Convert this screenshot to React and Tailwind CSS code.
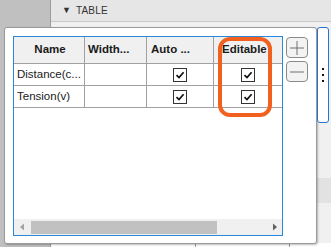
import React from 'react';

const font = { fontFamily: '"Liberation Sans", Arial, sans-serif' };

function Check() {
  return (
    <div className="w-[14px] h-[14px] border border-[#333333] bg-white flex items-center justify-center">
      <svg width="10" height="10" viewBox="0 0 10 10">
        <path d="M1.5 5.2 L4 7.6 L8.6 2.2" fill="none" stroke="#111111" strokeWidth="1.7" />
      </svg>
    </div>
  );
}

function SideButton({ minus }) {
  return (
    <div className="w-[22px] h-[21px] rounded-[4px] border border-[#8a8a8a] bg-[#f3f3f3] flex items-center justify-center">
      <svg width="16" height="16" viewBox="0 0 16 16">
        <path d="M1 8 H15" stroke="#707070" strokeWidth="1" />
        {!minus && <path d="M8 1 V15" stroke="#707070" strokeWidth="1" />}
      </svg>
    </div>
  );
}

const rows = [
  { name: 'Distance(c...', auto: true, editable: true },
  { name: 'Tension(v)', auto: true, editable: true },
];

export default function App() {
  return (
    <div className="relative w-[331px] h-[247px] overflow-hidden flex bg-[#f0f0f0]" style={font}>
      {/* background window */}
      <div className="w-[51px] h-full bg-[#c0c0c0] border-r border-[#9c9c9c]" />
      <div className="flex-1 flex flex-col">
        <div className="h-[22px] bg-[#e6e6e6] border-b border-[#c9c9c9] flex items-center pl-[11px] gap-[5px] text-[#333333]">
          <span className="text-[9px] leading-none">▼</span>
          <span className="text-[10px] leading-none tracking-[0.2px]">TABLE</span>
        </div>
        <div className="flex-1 flex flex-col">
          <div className="h-[156px]" />
          <div className="h-[25px] bg-[#e2e2e2]" />
          <div className="flex-1" />
          <div className="h-[4px] bg-white flex">
            <div className="w-[145px] border-r border-[#9c9c9c]" />
            <div className="w-[94px] border-r border-[#9c9c9c]" />
          </div>
        </div>
      </div>

      {/* popup */}
      <div className="absolute left-[4px] top-[27px] w-[313px] h-[217px] bg-white border border-[#9a9a9a] rounded-[3px] shadow-[1px_1px_2px_rgba(0,0,0,0.25)] flex pl-[8px] pt-[8px]">
        <div className="w-[270px] h-[200px] border border-[#2b87d8] flex flex-col">
          <div className="flex h-[27px] bg-[#f0f0f0] border-b border-[#a0a0a0] text-[11.5px] font-bold text-[#1a1a1a]">
            <div className="w-[71px] border-r border-[#a0a0a0] flex items-center justify-center pl-[2px]">Name</div>
            <div className="w-[62px] border-r border-[#a0a0a0] flex items-center pl-[3px]">Width...</div>
            <div className="w-[67px] border-r border-[#a0a0a0] flex items-center pl-[4px]">Auto ...</div>
            <div className="w-[68px] flex items-center pl-[8px]">Editable</div>
          </div>
          {rows.map((r) => (
            <div key={r.name} className="flex h-[22px] border-b border-[#a0a0a0] text-[11.5px] text-[#1a1a1a]">
              <div className="w-[71px] border-r border-[#a0a0a0] flex items-center pl-[3px] whitespace-nowrap overflow-hidden">{r.name}</div>
              <div className="w-[62px] border-r border-[#a0a0a0]" />
              <div className="w-[67px] border-r border-[#a0a0a0] flex items-center justify-center">{r.auto && <Check />}</div>
              <div className="w-[68px] flex items-center justify-center">{r.editable && <Check />}</div>
            </div>
          ))}
          <div className="flex-1" />
          <div className="h-[16px] bg-[#f0f0f0] flex items-center">
            <svg width="17" height="16" viewBox="0 0 17 16">
              <path d="M6 8 L10 4.5 V11.5 Z" fill="#a3a3a3" />
            </svg>
            <div className="w-[186px] h-[13px] bg-[#c1c1c1]" />
            <div className="flex-1" />
            <svg width="14" height="16" viewBox="0 0 14 16">
              <path d="M5 4.5 L9 8 L5 11.5 Z" fill="#606060" />
            </svg>
          </div>
        </div>
        <div className="ml-[3px] mt-[1px] flex flex-col gap-[3px]">
          <SideButton />
          <SideButton minus />
        </div>
      </div>

      {/* side handle */}
      <div className="absolute left-[317px] top-[27px] w-[12px] h-[96px] bg-white border border-[#2a72c8] rounded-[3px] flex flex-col items-center justify-center gap-[4px]">
        <div className="w-[2px] h-[2px] bg-[#111111]" />
        <div className="w-[2px] h-[2px] bg-[#111111]" />
        <div className="w-[2px] h-[2px] bg-[#111111]" />
      </div>

      {/* highlight annotation */}
      <div className="absolute left-[218px] top-[37px] w-[54px] h-[80px] border-[4px] border-[#f2601f] rounded-[12px]" />
    </div>
  );
}
